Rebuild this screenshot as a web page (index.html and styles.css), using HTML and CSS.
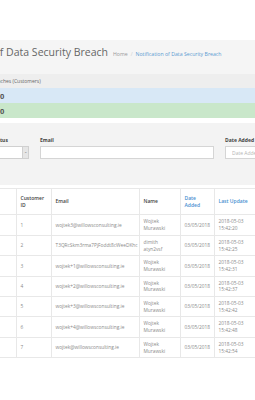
FILE: index.html
```html
<!DOCTYPE html>
<html lang="en">
<head>
  <meta charset="UTF-8" />
  <meta name="viewport" content="width=device-width, initial-scale=1.0"/>
  <title>Notification of Data Security Breach</title>
  <link rel="stylesheet" href="styles.css">
</head>
<body>

  <div class="page">

    <div class="page-head">
      <h1 class="page-title">Notification of Data Security Breach</h1>
      <ul class="breadcrumb">
        <li><a href="#">Home</a></li>
        <li class="active">Notification of Data Security Breach</li>
      </ul>
    </div>

    <div class="stats">
      <div class="stats-title">Number of Breaches (Customers)</div>
      <div class="stat stat-info"><span class="stat-value">0</span></div>
      <div class="stat stat-success"><span class="stat-value">0</span></div>
    </div>

    <form class="filters">
      <div class="field field-status">
        <label>Status</label>
        <div class="select"><span class="select-arrow">&#8964;</span></div>
      </div>
      <div class="field field-email">
        <label for="email">Email</label>
        <input type="text" id="email" class="input">
      </div>
      <div class="field field-date">
        <label for="dateAdded">Date Added</label>
        <input type="text" id="dateAdded" class="input" placeholder="Date Added">
      </div>
    </form>

    <table class="data">
      <colgroup>
        <col class="c-check"><col class="c-id"><col class="c-email"><col class="c-name"><col class="c-date"><col class="c-update"><col class="c-rest">
      </colgroup>
      <thead>
        <tr>
          <th></th>
          <th>Customer ID</th>
          <th>Email</th>
          <th>Name</th>
          <th><a href="#" class="sort">Date Added</a></th>
          <th><a href="#" class="sort">Last Update</a></th>
          <th></th>
        </tr>
      </thead>
      <tbody>
        <tr><td></td><td>1</td><td>wojtek3@willowsconsulting.ie</td><td>Wojtek Murawski</td><td class="nowrap">03/05/2018</td><td>2018-05-03 15:42:20</td><td></td></tr>
        <tr><td></td><td>2</td><td>T3QRcSkm3rma7PjFoddt8cWeeDKhc</td><td>dimith atyn2vsf</td><td class="nowrap">03/05/2018</td><td>2018-05-03 15:42:25</td><td></td></tr>
        <tr><td></td><td>3</td><td>wojtek+1@willowsconsulting.ie</td><td>Wojtek Murawski</td><td class="nowrap">03/05/2018</td><td>2018-05-03 15:42:31</td><td></td></tr>
        <tr><td></td><td>4</td><td>wojtek+2@willowsconsulting.ie</td><td>Wojtek Murawski</td><td class="nowrap">03/05/2018</td><td>2018-05-03 15:42:37</td><td></td></tr>
        <tr><td></td><td>5</td><td>wojtek+3@willowsconsulting.ie</td><td>Wojtek Murawski</td><td class="nowrap">03/05/2018</td><td>2018-05-03 15:42:42</td><td></td></tr>
        <tr><td></td><td>6</td><td>wojtek+4@willowsconsulting.ie</td><td>Wojtek Murawski</td><td class="nowrap">03/05/2018</td><td>2018-05-03 15:42:48</td><td></td></tr>
        <tr><td></td><td>7</td><td>wojtek@willowsconsulting.ie</td><td>Wojtek Murawski</td><td class="nowrap">03/05/2018</td><td>2018-05-03 15:42:54</td><td></td></tr>
      </tbody>
    </table>

  </div>

</body>
</html>
```

FILE: styles.css
```css
* {
  margin: 0;
  padding: 0;
  box-sizing: border-box;
}

html, body {
  overflow: hidden;
}

body {
  font-family: 'Open Sans', sans-serif;
  background: #fff;
  color: #666;
  width: 255px;
  height: 400px;
}

/* page is wider than the window, its left part is cut off */
.page {
  margin-left: -72px;
  width: 420px;
  padding-top: 40px;
}

.page-head {
  background-color: #f5f5f5;
  height: 34px;
  padding: 6px 0 0 6px;
  display: flex;
  align-items: baseline;
  gap: 5px;
}

.page-title {
  font-size: 10.5px;
  font-weight: 400;
  line-height: 13px;
  color: #666;
  white-space: nowrap;
}

.breadcrumb {
  list-style: none;
  display: flex;
  font-size: 5.2px;
  white-space: nowrap;
}

.breadcrumb a {
  color: #999;
  text-decoration: none;
}

.breadcrumb li + li::before {
  content: "/";
  color: #ccc;
  padding: 0 3px;
}

.breadcrumb .active {
  color: #5b9bd1;
}

.stats-title {
  height: 14px;
  line-height: 14px;
  background-color: #eeeeee;
  font-size: 5px;
  color: #666;
  padding-left: 35px;
  white-space: nowrap;
}

.stat {
  height: 15px;
  display: flex;
  align-items: center;
  padding-left: 72px;
}

.stat-info {
  background-color: #d8e8f6;
}

.stat-success {
  background-color: #c9e7ca;
}

.stat-value {
  font-size: 7.5px;
  font-weight: 700;
  color: #555;
}

.filters {
  margin-top: 5px;
  height: 62px;
  background-color: #f3f3f3;
  padding: 14px 0 0 64px;
  display: flex;
  gap: 11px;
}

.field label {
  display: block;
  font-size: 5px;
  font-weight: 700;
  line-height: 7px;
  margin-bottom: 2px;
  color: #444;
  white-space: nowrap;
}

.select {
  width: 37px;
  height: 13px;
  background-color: #fff;
  border: 1px solid #d0d0d0;
  display: flex;
  justify-content: flex-end;
}

.select-arrow {
  width: 6px;
  background-color: #e6e6e6;
  border-left: 1px solid #d0d0d0;
  font-size: 4px;
  line-height: 9px;
  text-align: center;
  color: #777;
}

.input {
  display: block;
  height: 13px;
  border: 1px solid #d5d5d5;
  background-color: #fff;
  font-family: 'Open Sans', sans-serif;
  font-size: 5px;
  color: #555;
  padding-left: 6px;
  outline: none;
}

.input::placeholder {
  color: #b5b5b5;
}

.field-email .input {
  width: 174px;
}

.field-date .input {
  width: 70px;
}

.data {
  margin: 3px 0 0 58px;
  border-collapse: collapse;
  table-layout: fixed;
  width: 333px;
  font-size: 4.8px;
  line-height: 6.7px;
  color: #8a8a8a;
}

.c-check { width: 30px; }
.c-id { width: 35px; }
.c-email { width: 88px; }
.c-name { width: 41px; }
.c-date { width: 34px; }
.c-update { width: 45px; }
.c-rest { width: 60px; }

.data th,
.data td {
  border: 1px solid #e8e8e8;
  padding: 3px 3.5px;
  text-align: left;
  vertical-align: middle;
  font-weight: 400;
}

.data th {
  padding: 6px 3.5px;
  font-size: 5px;
  font-weight: 600;
  color: #444;
}

.data .sort {
  color: #4a90d0;
  text-decoration: none;
}

.nowrap {
  white-space: nowrap;
}
```
